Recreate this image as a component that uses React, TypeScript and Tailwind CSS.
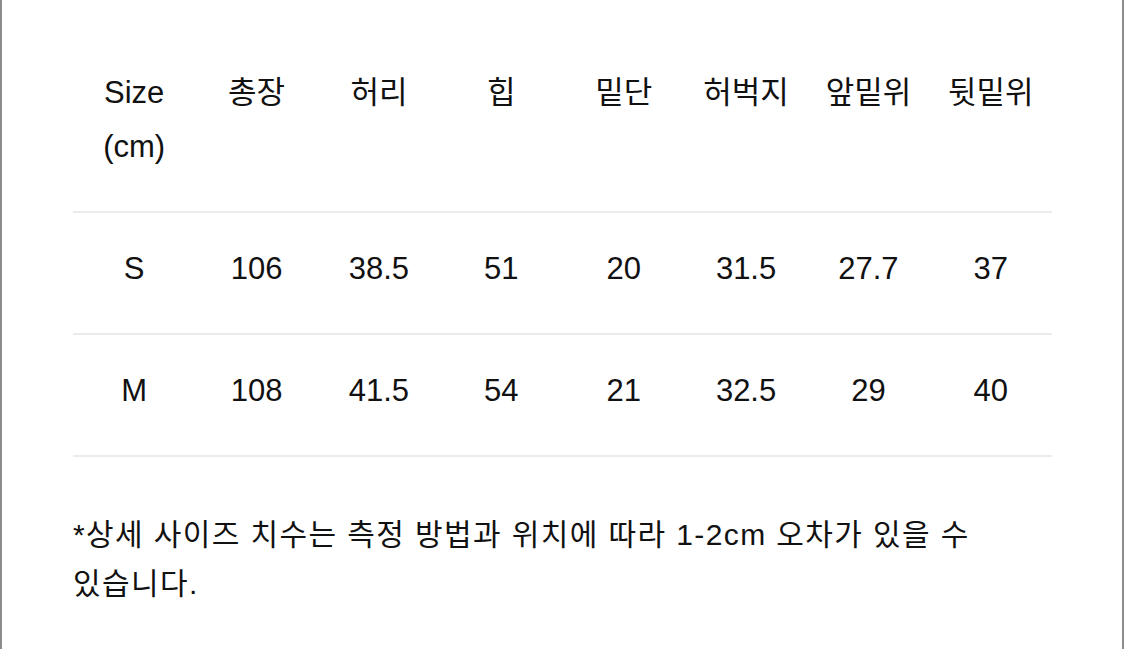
const headers = ["총장", "허리", "힙", "밑단", "허벅지", "앞밑위", "뒷밑위"];

const rows = [
  ["S", "106", "38.5", "51", "20", "31.5", "27.7", "37"],
  ["M", "108", "41.5", "54", "21", "32.5", "29", "40"],
];

export default function App() {
  return (
    <div
      className="w-[1124px] h-[649px] bg-white border-x-2 border-[#8c8c8c] overflow-hidden text-[#111111]"
      style={{ fontFamily: '"Liberation Sans", "Noto Sans CJK KR", sans-serif' }}
    >
      <div className="ml-[71px] w-[979px] pt-[66px]">
        {/* 헤더 */}
        <div className="grid grid-cols-8 text-center text-[31px] leading-[54px] pb-[37px] border-b-2 border-[#ebebeb]">
          <div>
            Size
            <br />
            (cm)
          </div>
          {headers.map((h) => (
            <div key={h}>{h}</div>
          ))}
        </div>

        {/* 사이즈 행 */}
        {rows.map((row) => (
          <div
            key={row[0]}
            className="grid grid-cols-8 text-center text-[31px] leading-[50px] pt-[31px] pb-[39px] border-b-2 border-[#ebebeb]"
          >
            {row.map((v, i) => (
              <div key={i}>{v}</div>
            ))}
          </div>
        ))}

        <p className="mt-[53px] text-[30px] leading-[49px] tracking-[1.4px]">
          *상세 사이즈 치수는 측정 방법과 위치에 따라 1-2cm 오차가 있을 수
          <br />
          있습니다.
        </p>
      </div>
    </div>
  );
}
